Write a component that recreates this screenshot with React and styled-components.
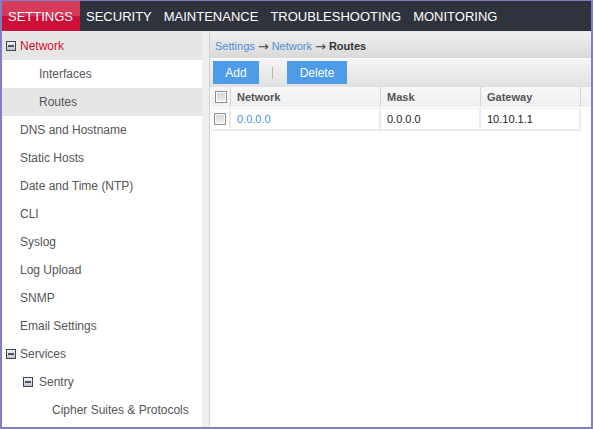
import React from "react";
import styled, { createGlobalStyle } from "styled-components";

const Global = createGlobalStyle`
  html, body {
    margin: 0;
    padding: 0;
    background: #ffffff;
  }
  * {
    box-sizing: border-box;
  }
`;

const tabs = ["SETTINGS", "SECURITY", "MAINTENANCE", "TROUBLESHOOTING", "MONITORING"];

const menu = [
  { label: "Network", level: 0, toggle: true, active: true, shaded: true },
  { label: "Interfaces", level: 1 },
  { label: "Routes", level: 1, shaded: true },
  { label: "DNS and Hostname", level: 0 },
  { label: "Static Hosts", level: 0 },
  { label: "Date and Time (NTP)", level: 0 },
  { label: "CLI", level: 0 },
  { label: "Syslog", level: 0 },
  { label: "Log Upload", level: 0 },
  { label: "SNMP", level: 0 },
  { label: "Email Settings", level: 0 },
  { label: "Services", level: 0, toggle: true },
  { label: "Sentry", level: 1, toggle: true },
  { label: "Cipher Suites & Protocols", level: 2 },
];

const MinusBox = () => (
  <svg width="10" height="10" viewBox="0 0 10 10">
    <defs>
      <linearGradient id="mb" x1="0" y1="0" x2="0" y2="1">
        <stop offset="0" stopColor="#f4f6f8" />
        <stop offset="1" stopColor="#b9c2cc" />
      </linearGradient>
    </defs>
    <rect x="0.5" y="0.5" width="9" height="9" fill="url(#mb)" stroke="#3d4350" />
    <rect x="2" y="4.2" width="6" height="1.6" fill="#2c313b" />
  </svg>
);

const App = () => {
  return (
    <>
      <Global />
      <Frame>
        <Nav>
          {tabs.map((t, i) => (
            <Tab key={t} $active={i === 0}>
              {t}
            </Tab>
          ))}
        </Nav>
        <Body>
          <Sidebar>
            <Menu>
              {menu.map((m) => (
                <Item
                  key={m.label}
                  $level={m.level}
                  $toggle={m.toggle}
                  $active={m.active}
                  $shaded={m.shaded}
                >
                  {m.toggle && (
                    <Toggle $deep={m.level > 0}>
                      <MinusBox />
                    </Toggle>
                  )}
                  {m.label}
                </Item>
              ))}
            </Menu>
            <Track />
          </Sidebar>
          <Content>
            <Crumbs>
              <Link>Settings</Link>
              <Arrow>→</Arrow>
              <Link>Network</Link>
              <Arrow>→</Arrow>
              <Current>Routes</Current>
            </Crumbs>
            <Toolbar>
              <Button>Add</Button>
              <Separator />
              <Button $wide>Delete</Button>
            </Toolbar>
            <Grid>
              <HeadRow>
                <HeadCell $center>
                  <Check />
                </HeadCell>
                <HeadCell>Network</HeadCell>
                <HeadCell>Mask</HeadCell>
                <HeadCell>Gateway</HeadCell>
                <HeadCell $filler />
              </HeadRow>
              <Row>
                <Cell $center>
                  <Check />
                </Cell>
                <Cell $link>0.0.0.0</Cell>
                <Cell>0.0.0.0</Cell>
                <Cell>10.10.1.1</Cell>
              </Row>
            </Grid>
          </Content>
        </Body>
      </Frame>
    </>
  );
};

export default App;

const Frame = styled.div`
  width: 593px;
  height: 429px;
  border: 2px solid #7e7ec6;
  border-top-width: 1px;
  display: flex;
  flex-direction: column;
  overflow: hidden;
  font-family: "Liberation Sans", Arial, sans-serif;
  background: #ffffff;
`;

const Nav = styled.div`
  height: 31px;
  flex-shrink: 0;
  display: flex;
  background: #2f333e;
  border-bottom: 1px solid #e9eaea;
`;

const Tab = styled.div`
  padding: 0 6px;
  display: flex;
  align-items: center;
  font-size: 13px;
  color: #ffffff;
  background: ${(p) =>
    p.$active
      ? "linear-gradient(#d73d5c 0%, #d4385a 48%, #cd0f37 52%, #cd0f37 100%)"
      : "transparent"};
  &:first-child {
    padding: 0 7px 0 6px;
  }
`;

const Body = styled.div`
  flex: 1;
  display: flex;
  min-height: 0;
`;

const Sidebar = styled.div`
  width: 208px;
  display: flex;
  border-right: 1px solid #cfcfcf;
  overflow: hidden;
`;

const Menu = styled.div`
  width: 200px;
  display: flex;
  flex-direction: column;
  background: #ffffff;
`;

const Track = styled.div`
  flex: 1;
  background: #efefef;
`;

const Item = styled.div`
  height: 28px;
  flex-shrink: 0;
  display: flex;
  align-items: center;
  font-size: 12px;
  color: ${(p) => (p.$active ? "#cf1038" : "#555555")};
  background: ${(p) => (p.$shaded ? "#e6e7e5" : "#ffffff")};
  padding-left: ${(p) => {
    if (p.$level === 0) return p.$toggle ? "4px" : "18px";
    if (p.$level === 1) return p.$toggle ? "21px" : "37px";
    return "50px";
  }};
`;

const Toggle = styled.span`
  display: inline-flex;
  width: 10px;
  height: 10px;
  margin-right: ${(p) => (p.$deep ? "6px" : "4px")};
`;

const Content = styled.div`
  flex: 1;
  display: flex;
  flex-direction: column;
  background: #ffffff;
`;

const Crumbs = styled.div`
  height: 27px;
  display: flex;
  align-items: center;
  gap: 3px;
  padding: 2px 0 0 5px;
  font-size: 11px;
  background: linear-gradient(#f0f0f0, #d9d9d9);
  border-bottom: 1px solid #fafafa;
`;

const Link = styled.span`
  color: #4a90d9;
`;

const Arrow = styled.span`
  color: #444444;
  font-family: "DejaVu Sans", sans-serif;
  font-size: 13px;
  line-height: 1;
`;

const Current = styled.span`
  color: #333333;
  font-weight: bold;
`;

const Toolbar = styled.div`
  height: 28px;
  display: flex;
  align-items: flex-start;
  padding: 2px 0 0 3px;
  background: linear-gradient(#f5f5f5, #e1e1e1);
`;

const Button = styled.div`
  width: ${(p) => (p.$wide ? "60px" : "46px")};
  height: 23px;
  display: flex;
  align-items: center;
  justify-content: center;
  font-size: 12px;
  color: #ffffff;
  background: #4e9ce8;
`;

const Separator = styled.div`
  width: 1px;
  height: 12px;
  margin: 6px 14px 0 13px;
  background: #b8b8b8;
`;

const Grid = styled.div`
  display: flex;
  flex-direction: column;
  padding-left: 1px;
`;

const HeadRow = styled.div`
  display: grid;
  grid-template-columns: 20px 150px 100px 100px 1fr;
  height: 20px;
  background: linear-gradient(#f7f7f7, #efefef);
`;

const HeadCell = styled.div`
  display: flex;
  align-items: center;
  justify-content: ${(p) => (p.$center ? "center" : "flex-start")};
  padding-left: ${(p) => (p.$center ? "0" : "6px")};
  font-size: 11px;
  font-weight: bold;
  color: #555555;
  border-right: ${(p) => (p.$filler ? "none" : "1px solid #d5d5d5")};
`;

const Row = styled.div`
  display: grid;
  grid-template-columns: 20px 150px 100px 100px;
  height: 24px;
  border-top: 1px solid #ffffff;
`;

const Cell = styled.div`
  display: flex;
  align-items: center;
  justify-content: ${(p) => (p.$center ? "center" : "flex-start")};
  padding-left: ${(p) => (p.$center ? "0" : "6px")};
  font-size: 11px;
  color: ${(p) => (p.$link ? "#4a90d9" : "#222222")};
  border-right: 2px solid #ececec;
  border-bottom: 2px solid #ececec;
  border-top: 1px solid #ececec;
`;

const Check = styled.span`
  width: 12px;
  height: 12px;
  border: 1px solid #8c8c8c;
  box-shadow: inset 0 0 0 1px #ffffff;
  background: linear-gradient(#d2d2d2, #f2f2f2);
`;
